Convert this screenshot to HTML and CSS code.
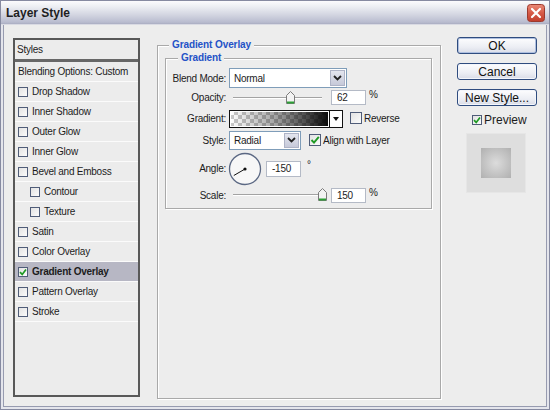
FILE: index.html
```html
<!DOCTYPE html>
<html lang="en">
<head>
<meta charset="utf-8">
<title>Layer Style</title>
<link rel="stylesheet" href="styles.css">
</head>
<body>
<div class="window">
  <div class="titlebar">
    <span class="title">Layer Style</span>
    <span class="close">
      <svg width="18" height="18" viewBox="0 0 18 18">
        <defs>
          <linearGradient id="cg" x1="0" y1="0" x2="0" y2="1">
            <stop offset="0" stop-color="#ea8a78"/>
            <stop offset="0.5" stop-color="#d65a47"/>
            <stop offset="1" stop-color="#c13d2c"/>
          </linearGradient>
        </defs>
        <rect x="0.5" y="0.5" width="17" height="17" rx="3" fill="url(#cg)" stroke="#9c3a2e"/>
        <path d="M5 5 L13 13 M13 5 L5 13" stroke="#fff" stroke-width="2.2" stroke-linecap="round"/>
      </svg>
    </span>
  </div>
  <div class="frame">
    <div class="styles">
      <div class="styles-head">Styles</div>
      <div class="item">Blending Options: Custom</div>
      <div class="item"><span class="cb"></span>Drop Shadow</div>
      <div class="item"><span class="cb"></span>Inner Shadow</div>
      <div class="item"><span class="cb"></span>Outer Glow</div>
      <div class="item"><span class="cb"></span>Inner Glow</div>
      <div class="item"><span class="cb"></span>Bevel and Emboss</div>
      <div class="item sub"><span class="cb"></span>Contour</div>
      <div class="item sub"><span class="cb"></span>Texture</div>
      <div class="item"><span class="cb"></span>Satin</div>
      <div class="item"><span class="cb"></span>Color Overlay</div>
      <div class="item active"><span class="cb"><svg width="8" height="8" viewBox="0 0 8 8"><path d="M1 4.2 L3.2 6.4 L7 1.4" fill="none" stroke="#1f9a24" stroke-width="1.7"/></svg></span>Gradient Overlay</div>
      <div class="item"><span class="cb"></span>Pattern Overlay</div>
      <div class="item"><span class="cb"></span>Stroke</div>
    </div>

    <div class="group outer">
      <div class="legend">Gradient Overlay</div>
      <div class="group inner">
        <div class="legend">Gradient</div>
        <div class="form">
          <span class="lbl">Blend Mode:</span>
          <div class="ctl">
            <div class="select wide">
              <span class="select-val">Normal</span>
              <span class="select-btn"><svg width="9" height="6" viewBox="0 0 9 6"><path d="M1 1 L4.5 4.5 L8 1" fill="none" stroke="#222" stroke-width="1.8"/></svg></span>
            </div>
          </div>

          <span class="lbl">Opacity:</span>
          <div class="ctl">
            <div class="slider">
              <div class="track"></div>
              <span class="thumb" style="left:57px"><svg width="9" height="13" viewBox="0 0 9 13"><path d="M0.5 4.5 L4.5 0.5 L8.5 4.5 L8.5 12.5 L0.5 12.5 Z" fill="#f3f3f3" stroke="#7b7b7b"/><path d="M1 11.5 H8" stroke="#2c9f35" stroke-width="2"/></svg></span>
            </div>
            <span class="num">62</span>
            <span class="unit">%</span>
          </div>

          <span class="lbl">Gradient:</span>
          <div class="ctl">
            <div class="grad">
              <span class="swatch"></span>
              <span class="grad-btn"><span class="tri"></span></span>
            </div>
            <span class="cb big gap-rev"></span>
            <span class="cb-label">Reverse</span>
          </div>

          <span class="lbl">Style:</span>
          <div class="ctl">
            <div class="select narrow">
              <span class="select-val">Radial</span>
              <span class="select-btn"><svg width="9" height="6" viewBox="0 0 9 6"><path d="M1 1 L4.5 4.5 L8 1" fill="none" stroke="#222" stroke-width="1.8"/></svg></span>
            </div>
            <span class="cb big gap-align"><svg width="10" height="10" viewBox="0 0 10 10"><path d="M1.5 5 L4 7.6 L8.8 1.8" fill="none" stroke="#1f9a24" stroke-width="1.9"/></svg></span>
            <span class="cb-label">Align with Layer</span>
          </div>

          <span class="lbl">Angle:</span>
          <div class="ctl">
            <span class="dial">
              <svg width="34" height="34" viewBox="0 0 34 34">
                <circle cx="17" cy="17" r="15.5" fill="#f7f7f7" stroke="#5b6883" stroke-width="1.3"/>
                <path d="M17 17 L5.8 23.5" stroke="#111" stroke-width="1"/>
                <circle cx="17" cy="17" r="1.6" fill="#111"/>
              </svg>
            </span>
            <span class="num angle">-150</span>
            <span class="deg">°</span>
          </div>

          <span class="lbl">Scale:</span>
          <div class="ctl">
            <div class="slider">
              <div class="track"></div>
              <span class="thumb" style="left:89px"><svg width="9" height="13" viewBox="0 0 9 13"><path d="M0.5 4.5 L4.5 0.5 L8.5 4.5 L8.5 12.5 L0.5 12.5 Z" fill="#f3f3f3" stroke="#7b7b7b"/><path d="M1 11.5 H8" stroke="#2c9f35" stroke-width="2"/></svg></span>
            </div>
            <span class="num">150</span>
            <span class="unit">%</span>
          </div>
        </div>
      </div>
    </div>

    <div class="actions">
      <button class="btn default">OK</button>
      <button class="btn">Cancel</button>
      <button class="btn">New Style...</button>
      <div class="preview-row">
        <span class="cb"><svg width="8" height="8" viewBox="0 0 8 8"><path d="M1 4.2 L3.2 6.4 L7 1.4" fill="none" stroke="#1f9a24" stroke-width="1.7"/></svg></span>
        <span class="preview-label">Preview</span>
      </div>
      <div class="preview"><span class="preview-swatch"></span></div>
    </div>
  </div>
</div>
</body>
</html>
```

FILE: styles.css
```css
* { box-sizing: border-box; }

html, body {
  margin: 0;
  padding: 0;
}

body {
  width: 550px;
  height: 410px;
  overflow: hidden;
  font-family: "Liberation Sans", Arial, sans-serif;
  font-size: 10px;
  letter-spacing: -0.25px;
  color: #1c1c1c;
  background: #ededed;
}

.window {
  width: 550px;
  height: 410px;
  border: 1px solid #868aa1;
  background: #e4e5ec;
  display: flex;
  flex-direction: column;
}

.titlebar {
  flex: none;
  height: 24px;
  display: flex;
  align-items: center;
  justify-content: space-between;
  padding: 0 4px 0 5px;
  background: linear-gradient(#fbfbfd 0%, #eef0f4 22%, #d3d5e1 60%, #b9bccf 92%, #aaadc2 100%);
  border-bottom: 1px solid #d9dae3;
}

.title {
  font-size: 12px;
  font-weight: bold;
  letter-spacing: 0;
  color: #1e1e22;
}

.close {
  display: flex;
  width: 18px;
  height: 18px;
}

.frame {
  flex: 1;
  display: flex;
  align-items: flex-start;
  margin: 0 2px 2px;
  border: 1px solid #979bb0;
  border-top: none;
  background: #ededed;
  padding: 12px 9px 0 9px;
}

/* ---------- styles list ---------- */
.styles {
  flex: none;
  width: 127px;
  height: 359px;
  margin-top: 1px;
  border: 2px solid #585858;
  background: #ececec;
  overflow: hidden;
}

.styles-head {
  height: 22px;
  padding-left: 2px;
  display: flex;
  align-items: center;
  border-bottom: 3px solid #676767;
}

.item {
  height: 20px;
  display: flex;
  align-items: center;
  padding-left: 3px;
  border-bottom: 1px solid #fbfbfb;
  white-space: nowrap;
}

.item.sub { padding-left: 15px; }

.item.active {
  background: #b7b7c4;
  font-weight: bold;
}

.cb {
  flex: none;
  width: 10px;
  height: 10px;
  margin-right: 4px;
  border: 1px solid #4f5c78;
  background: linear-gradient(135deg, #e2e2e2, #fbfbfb);
  display: flex;
  align-items: center;
  justify-content: center;
}

.cb.big {
  width: 12px;
  height: 12px;
  margin-right: 2px;
}

.gap-rev { margin-left: 7px; }
.gap-align { margin-left: 8px; }

/* ---------- groups ---------- */
.group {
  border: 1px solid #a9a9a9;
  box-shadow: inset 1px 1px 0 #fff, 1px 1px 0 #fff;
}

.group.outer {
  flex: none;
  width: 284px;
  height: 354px;
  margin: 8px 0 0 17px;
}

.legend {
  width: max-content;
  margin-top: -7px;
  line-height: 12px;
  padding: 0 3px;
  background: #ededed;
  color: #2452c7;
  font-weight: bold;
  letter-spacing: -0.1px;
}

.outer > .legend { margin-left: 11px; }

.group.inner {
  width: 267px;
  height: 151px;
  margin: 7px 0 0 7px;
}

.inner > .legend { margin-left: 12px; }

.form {
  margin-top: 4px;
  display: grid;
  grid-template-columns: 60px 1fr;
  grid-template-rows: 20px 19px 22px 22px 35px 18px;
  column-gap: 3px;
}

.lbl {
  text-align: right;
  align-self: center;
  white-space: nowrap;
}

.ctl {
  display: flex;
  align-items: center;
}

/* select */
.select {
  height: 20px;
  display: flex;
  border: 1px solid #7f9db9;
  background: #fff;
}

.select.wide { width: 118px; }
.select.narrow { width: 72px; height: 19px; }

.select-val {
  flex: 1;
  padding-left: 4px;
  display: flex;
  align-items: center;
}

.select-btn {
  width: 15px;
  margin: 1px;
  border: 1px solid #aeb3c6;
  background: linear-gradient(#e3e5ee, #c6c9d9);
  display: flex;
  align-items: center;
  justify-content: center;
}

/* slider */
.slider {
  position: relative;
  width: 102px;
  height: 16px;
  display: flex;
  align-items: center;
}

.track {
  margin: 0 9px 0 4px;
  flex: 1;
  height: 2px;
  border-top: 1px solid #a3a3a3;
  border-bottom: 1px solid #fff;
}

.thumb {
  position: absolute;
  top: 1px;
  display: flex;
}

.num {
  width: 35px;
  height: 15px;
  padding-left: 5px;
  border: 1px solid #b4bac6;
  background: #fff;
  display: flex;
  align-items: center;
}

.unit { margin-left: 3px; align-self: flex-start; margin-top: 1px; }

/* gradient widget */
.grad {
  display: flex;
  margin-top: 1px;
}

.swatch {
  width: 101px;
  height: 18px;
  border: 1px solid #111;
  box-shadow: inset 0 0 0 1px #fff;
  background:
    linear-gradient(to right, rgba(0,0,0,0) 0%, rgba(0,0,0,0.35) 45%, rgba(0,0,0,0.96) 100%),
    repeating-conic-gradient(#c9c9c9 0 25%, #ffffff 0 50%) 0 0 / 8px 8px;
}

.grad-btn {
  width: 13px;
  height: 18px;
  border: 1px solid #111;
  border-left: none;
  background: #fff;
  display: flex;
  align-items: center;
  justify-content: center;
}

.tri {
  width: 0;
  height: 0;
  border-left: 3px solid transparent;
  border-right: 3px solid transparent;
  border-top: 4px solid #111;
}

/* angle */
.dial {
  display: flex;
  width: 34px;
  height: 34px;
  margin-left: -1px;
}

.num.angle { margin-left: 4px; height: 16px; }

.deg {
  margin-left: 6px;
  align-self: flex-start;
  margin-top: 8px;
}

/* ---------- actions ---------- */
.actions {
  flex: none;
  width: 80px;
  margin-left: 16px;
  display: flex;
  flex-direction: column;
  align-items: flex-start;
}

.btn {
  width: 80px;
  height: 17px;
  margin: 0 0 9px;
  padding: 0;
  border: 1px solid #2f4c7f;
  border-radius: 3px;
  background: linear-gradient(#fdfdfe, #eceef4 60%, #d9dce7);
  box-shadow: inset 0 0 0 1px #f4f6fb;
  font-family: "Liberation Sans", Arial, sans-serif;
  font-size: 12px;
  letter-spacing: 0;
  line-height: 14px;
  color: #111;
}

.btn.default {
  box-shadow: inset 0 0 0 1px #aebfdf;
}

.preview-row {
  margin: -2px 0 0 15px;
  height: 13px;
  display: flex;
  align-items: center;
}

.preview-row .cb { margin-right: 2px; }

.preview-label { font-size: 12px; letter-spacing: 0; }

.preview {
  margin: 7px 0 0 9px;
  width: 60px;
  height: 60px;
  background: #dedede;
  border: 1px solid #e6e6e6;
  display: flex;
  align-items: center;
  justify-content: center;
}

.preview-swatch {
  width: 30px;
  height: 30px;
  background: radial-gradient(circle at 50% 50%, #dcdcdc 0%, #c8c8c8 45%, #b0b0b0 100%);
}
```
